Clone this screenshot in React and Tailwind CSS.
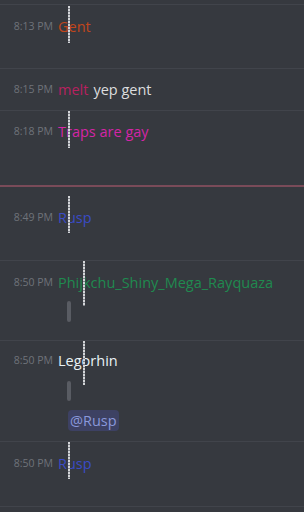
import React from "react";

const font = { fontFamily: '"Open Sans", "Liberation Sans", sans-serif' };

const Dash = ({ left, top, height }) => (
  <span
    className="absolute w-[2px] bg-[repeating-linear-gradient(to_bottom,#d3d5d8_0_2px,#80838a_2px_3px)]"
    style={{ left, top, height }}
  />
);

const Line = ({ time, children }) => (
  <div className="flex items-center h-5">
    <span className="w-[53px] text-right text-[10.5px] text-[#6f737a] shrink-0">{time}</span>
    <span className="ml-[5px] text-[14.5px] leading-5 whitespace-nowrap">{children}</span>
  </div>
);

export default function App() {
  return (
    <div className="w-[304px] h-[512px] bg-[#36393f] overflow-hidden" style={font}>
      <div className="h-[4px]" />

      <div className="relative h-[64px] border-t border-[#41444b] pt-[12px]">
        <Line time="8:13 PM">
          <span className="text-[#c2461c]">Gent</span>
        </Line>
        <Dash left={68} top={1} height={37} />
      </div>

      <div className="relative h-[42px] border-t border-[#41444b] pt-[11px]">
        <Line time="8:15 PM">
          <span className="text-[#b8215f]">melt</span>
          <span className="text-[#dcddde] ml-[5px]">yep gent</span>
        </Line>
      </div>

      <div className="relative h-[75px] border-t border-[#41444b] pt-[11px]">
        <Line time="8:18 PM">
          <span className="text-[#d425a6]">Traps are gay</span>
        </Line>
        <Dash left={68} top={0} height={37} />
      </div>

      <div className="h-[2px] bg-[#7a4b59]" />

      <div className="relative h-[73px] pt-[21px]">
        <Line time="8:49 PM">
          <span className="text-[#3a4bc6]">Rusp</span>
        </Line>
        <Dash left={68} top={9} height={37} />
      </div>

      <div className="relative h-[80px] border-t border-[#41444b] pt-[12px]">
        <Line time="8:50 PM">
          <span className="text-[#208a4f]">Phijkchu_Shiny_Mega_Rayquaza</span>
        </Line>
        <div className="ml-[67px] mt-[8px] w-[4px] h-[21px] rounded-full bg-[#595c63]" />
        <Dash left={83} top={0} height={45} />
      </div>

      <div className="relative h-[101px] border-t border-[#41444b] pt-[10px]">
        <Line time="8:50 PM">
          <span className="text-[#e8f1f5]">Legorhin</span>
        </Line>
        <div className="ml-[67px] mt-[10px] w-[4px] h-[20px] rounded-full bg-[#595c63]" />
        <div className="ml-[68px] mt-[9px] w-fit px-[2px] h-[21px] flex items-center rounded-sm bg-[#3d4163] text-[14.5px] text-[#8a98db]">
          @Rusp
        </div>
        <Dash left={83} top={0} height={44} />
      </div>

      <div className="relative h-[65px] border-t border-[#41444b] pt-[12px]">
        <Line time="8:50 PM">
          <span className="text-[#3a4bc6]">Rusp</span>
        </Line>
        <Dash left={68} top={0} height={37} />
      </div>

      <div className="border-t border-[#41444b]" />
    </div>
  );
}
